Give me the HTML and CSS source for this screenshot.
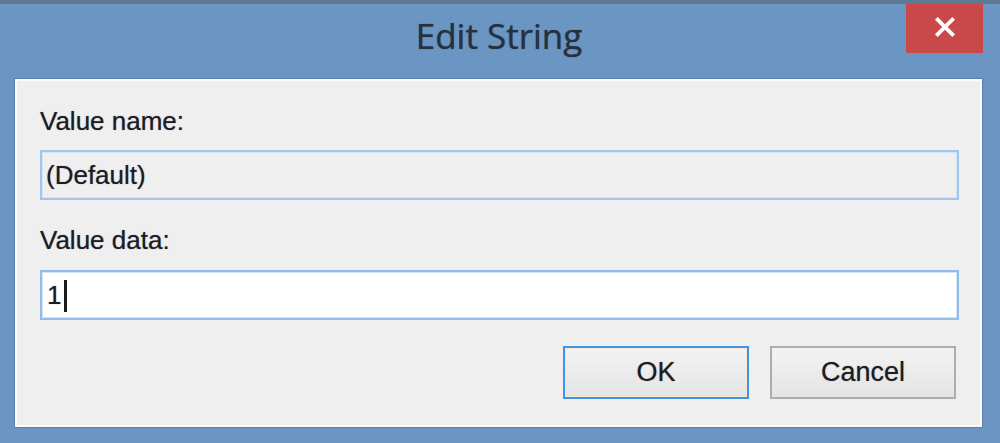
FILE: index.html
```html
<!DOCTYPE html>
<html>
<head>
<meta charset="utf-8">
<link rel="stylesheet" href="styles.css">
</head>
<body>
<div class="window">
  <div class="titlebar">
    <div class="title">Edit String</div>
    <div class="close"><svg viewBox="0 0 24 24" width="24" height="24"><path d="M4 4 L20 20 M20 4 L4 20" stroke="#fff" stroke-width="4.2" stroke-linecap="square"/></svg></div>
  </div>
  <div class="client">
    <div class="label">Value name:</div>
    <div class="field field-disabled">(Default)</div>
    <div class="label label-second">Value data:</div>
    <div class="field field-active">1<span class="caret"></span></div>
    <div class="buttons">
      <div class="btn btn-default">OK</div>
      <div class="btn">Cancel</div>
    </div>
  </div>
</div>
</body>
</html>
```

FILE: styles.css
```css
html, body {
  margin: 0;
  padding: 0;
}
body {
  width: 1000px;
  height: 443px;
  overflow: hidden;
  background: #6b96c3;
  font-family: "Liberation Sans", Arial, sans-serif;
}
.window {
  border-top: 4px solid #5f7894;
  height: 439px;
  box-sizing: border-box;
}
.titlebar {
  height: 75px;
  display: grid;
  grid-template-columns: 1fr auto 1fr;
  align-items: start;
}
.title {
  grid-column: 2;
  font-family: "Open Sans", "Noto Sans", sans-serif;
  font-size: 35px;
  line-height: 40px;
  margin-top: 12px;
  color: #27303d;
  margin-left: -2px;
  text-shadow: 0 0 1px rgba(30, 36, 50, 0.7);
}
.close {
  grid-column: 3;
  justify-self: end;
  width: 77px;
  height: 49px;
  margin-right: 17px;
  background: #c9484a;
  display: flex;
  align-items: center;
  justify-content: center;
}
.close svg {
  width: 22px;
  height: 22px;
  margin-top: -3px;
}
.client {
  margin-left: 15px;
  width: 967px;
  height: 348px;
  box-sizing: border-box;
  background: #efefef;
  border: 2px solid #fbfbfb;
  box-shadow: 0 0 0 1px #5a80ab;
  padding: 25px 21px 0 23px;
  color: #1c1c24;
  text-shadow: 0 0 1px rgba(20, 20, 40, 0.55);
}
.label {
  font-size: 26px;
  line-height: 30px;
  height: 30px;
}
.label-second {
  margin-top: 25px;
}
.field {
  margin-top: 14px;
  height: 50px;
  box-sizing: border-box;
  border: 2px solid #a2c5ec;
  box-shadow: inset 0 0 0 1px #d4e5f7;
  font-size: 26px;
  line-height: 46px;
  padding: 0 4px;
  display: flex;
  align-items: center;
}
.field-disabled {
  background: #efefef;
}
.field-active {
  background: #ffffff;
  margin-top: 15px;
  padding-left: 5px;
  border-color: #94bce8;
}
.caret {
  display: inline-block;
  width: 3px;
  height: 32px;
  background: #1a1a1a;
  margin-left: 3px;
  margin-top: 2px;
}
.buttons {
  display: flex;
  justify-content: flex-end;
  gap: 21px;
  margin-top: 26px;
  padding-right: 3px;
}
.btn {
  width: 186px;
  height: 53px;
  box-sizing: border-box;
  border: 2px solid #adadad;
  background: linear-gradient(#f3f3f3, #e4e4e4);
  font-size: 27px;
  display: flex;
  align-items: center;
  justify-content: center;
  color: #1c1c24;
}
.btn-default {
  border-color: #3e94ea;
  box-shadow: inset 0 0 0 1px #fbe8cc;
}
```
